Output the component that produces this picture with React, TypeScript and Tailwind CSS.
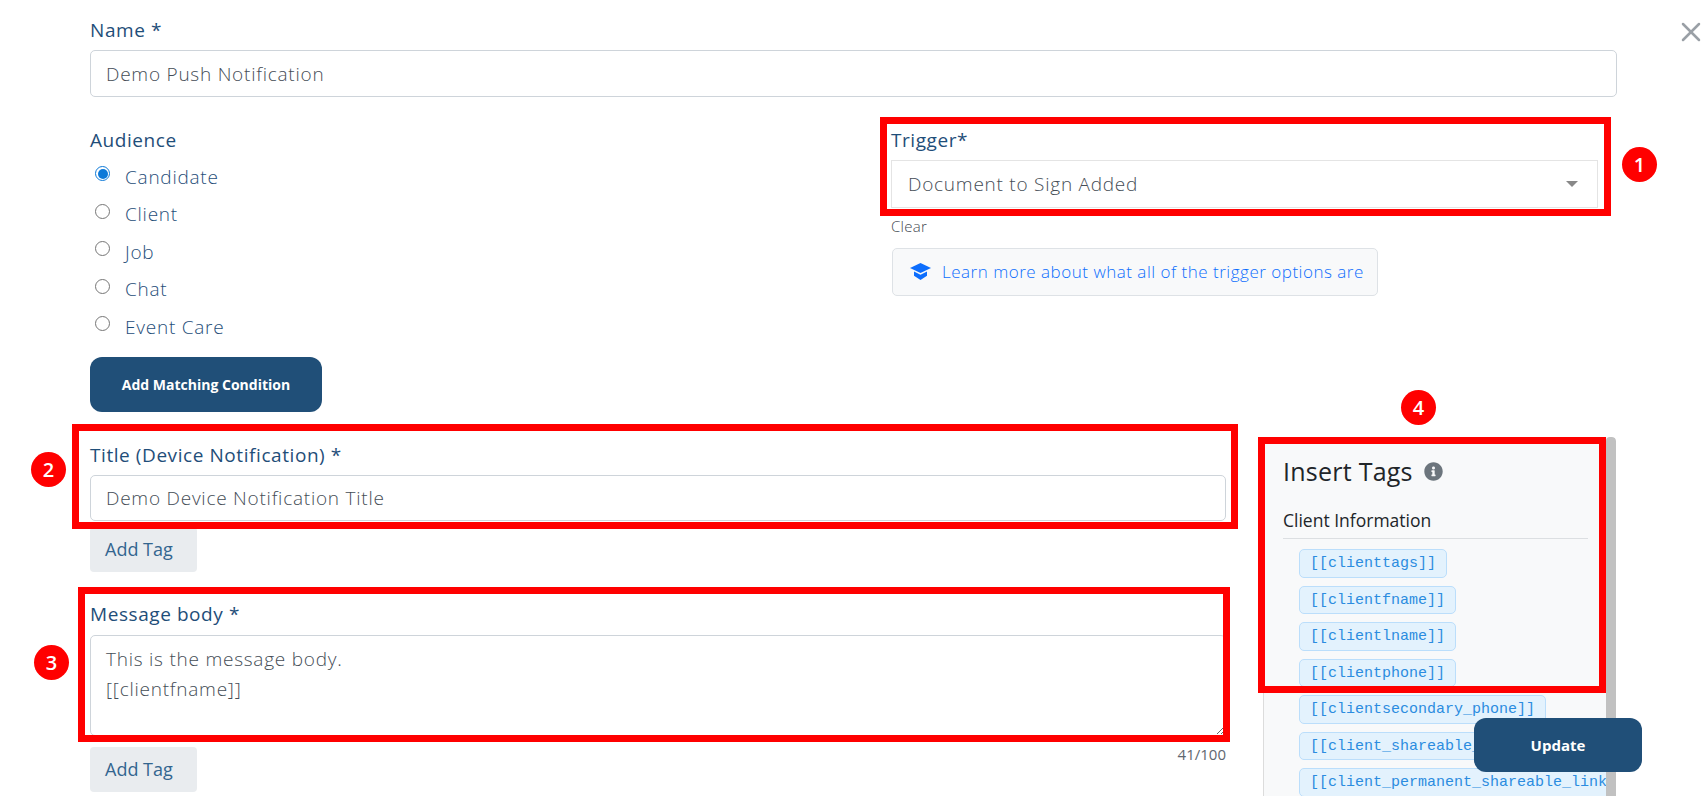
import { FaInfoCircle } from 'react-icons/fa';
import { X } from 'lucide-react';

const audiences = ['Candidate', 'Client', 'Job', 'Chat', 'Event Care'];

const tags = [
  '[[clienttags]]',
  '[[clientfname]]',
  '[[clientlname]]',
  '[[clientphone]]',
  '[[clientsecondary_phone]]',
  '[[client_shareable_link]]',
  '[[client_permanent_shareable_link]]',
];

function Label({ children }: { children: React.ReactNode }) {
  return <label className="block text-[19px] leading-[24px] font-medium tracking-[0.03em] text-[#1f4e79]">{children}</label>;
}

function AddTag({ className }: { className: string }) {
  return (
    <button className={`block w-[107px] h-[45px] pl-[15px] text-left rounded bg-[#e9ecef] text-[18px] text-[#33658f] ${className}`}>
      Add Tag
    </button>
  );
}

function Badge({ n, className }: { n: number; className: string }) {
  return (
    <span className={`absolute flex items-center justify-center w-[35px] h-[35px] rounded-full bg-[#ff0000] text-white text-[20px] font-semibold ${className}`}>
      {n}
    </span>
  );
}

function CapIcon() {
  return (
    <svg viewBox="0 0 21 17" className="w-[21px] h-[17px] -mt-[2px] shrink-0 fill-[#0d6efd]">
      <path d="M10.5 0 21 5 10.5 10 0 5z" />
      <path d="M4 8.5l6.5 3.2L17 8.5v4.3L10.5 17 4 12.8z" />
    </svg>
  );
}

export default function App() {
  return (
    <div className="relative h-[796px] overflow-hidden bg-white font-['Open_Sans','Liberation_Sans',sans-serif]">
      {/* Main form */}
      <div className="pl-[90px] pr-[88px] pt-[18px]">
        <Label>Name *</Label>
        <input
          readOnly
          value="Demo Push Notification"
          className="block w-full h-[47px] mt-[8px] px-[15px] rounded-[5px] border border-[#ced4da] text-[19px] tracking-[0.04em] font-light text-[#454d56] outline-none"
        />

        {/* Audience + trigger */}
        <div className="flex mt-[31px]">
          <div className="w-[801px]">
            <Label>Audience</Label>
            <div className="mt-[14px] flex flex-col gap-[15.5px]">
              {audiences.map((a, i) => (
                <div key={a} className="flex items-center h-[22px]">
                  <span
                    className={`w-[15px] h-[15px] ml-[5px] -mt-[7px] rounded-full border flex items-center justify-center ${
                      i === 0 ? 'border-[#0d79d8]' : 'border-[#767676]'
                    }`}
                  >
                    {i === 0 && <span className="w-[10px] h-[10px] rounded-full bg-[#0d79d8]" />}
                  </span>
                  <span className="ml-[15px] text-[19px] tracking-[0.04em] font-light text-[#1f4e79]">{a}</span>
                </div>
              ))}
            </div>
            <button className="block w-[232px] h-[55px] mt-[19px] rounded-[12px] bg-[#204f78] text-white text-[14px] font-bold">
              Add Matching Condition
            </button>
          </div>

          <div className="w-[707px]">
            <Label>Trigger*</Label>
            <div className="flex items-center justify-between h-[48px] mt-[8px] pl-[16px] pr-[19px] border border-[#e4e4e4] text-[19px] tracking-[0.04em] font-light text-[#454d56]">
              <span>Document to Sign Added</span>
              <span className="w-0 h-0 border-x-[6px] border-x-transparent border-t-[6px] border-t-[#888888]" />
            </div>
            <div className="mt-[8px] text-[15px] leading-[20px] tracking-[0.02em] font-light text-[#3f4850]">Clear</div>
            <div className="flex items-center w-[486px] h-[48px] mt-[12px] ml-[1px] pl-[17px] rounded-[5px] border border-[#dee2e6] bg-[#f8f9fa]">
              <CapIcon />
              <span className="ml-[11px] text-[17px] tracking-[0.03em] font-light text-[#0d6efd]">Learn more about what all of the trigger options are</span>
            </div>
          </div>
        </div>

        {/* Message fields + tag list */}
        <div className="flex gap-[37px] mt-[25px]">
          <div className="w-[1136px] shrink-0">
            <div className="mt-[6px]">
              <Label>Title (Device Notification) *</Label>
            </div>
            <input
              readOnly
              value="Demo Device Notification Title"
              className="block w-full h-[46px] mt-[8px] px-[15px] rounded-[5px] border border-[#ced4da] text-[19px] tracking-[0.04em] font-light text-[#454d56] outline-none"
            />
            <AddTag className="mt-[6px]" />

            <div className="mt-[30px]">
              <Label>Message body *</Label>
            </div>
            <textarea
              readOnly
              value={'This is the message body.\n[[clientfname]]'}
              className="block w-full h-[101px] mt-[9px] px-[15px] py-[8px] rounded-[5px] border border-[#ced4da] text-[19px] leading-[30px] tracking-[0.04em] font-light text-[#454d56] outline-none"
            />
            <div className="text-right text-[15px] leading-[20px] mt-[8px] text-[#5f6770]">41/100</div>
            <AddTag className="-mt-[17px]" />
          </div>

          {/* Insert tags panel */}
          <div className="relative w-[353px] h-[400px] pl-[19px] pt-[18px] overflow-hidden rounded-tr border-l border-[#dcdcdc] bg-[#f8f9fa]">
            <div className="flex items-center">
              <span className="text-[25px] leading-[32px] tracking-[0.01em] text-[#212529]">Insert Tags</span>
              <FaInfoCircle className="ml-[11px] text-[19px] text-[#6c757d]" />
            </div>
            <div className="mt-[21px] pb-[6px] mr-[28px] border-b border-[#dcdfe2] text-[17.5px] leading-[24px] text-[#212529]">
              Client Information
            </div>
            <div className="mt-[10px] ml-[16px] flex flex-col items-start gap-[8px] w-[307px] overflow-hidden">
              {tags.map(t => (
                <span
                  key={t}
                  className="shrink-0 h-[28.5px] px-[10px] leading-[27px] rounded-[5px] border border-[#bbdefb] bg-[#e3f2fd] text-[15px] whitespace-nowrap text-[#2b8ce0] font-['Liberation_Mono',monospace]"
                >
                  {t}
                </span>
              ))}
            </div>
            {/* scrollbar */}
            <div className="absolute top-0 right-0 w-[10px] h-full rounded-t bg-[#c1c1c1]" />
          </div>
        </div>
      </div>

      {/* Close */}
      <X className="absolute top-[16px] left-[1675px] w-[32px] h-[32px] text-[#9aa0a6]" strokeWidth={1.9} />

      {/* Annotation boxes */}
      <div className="absolute left-[880px] top-[117px] w-[731px] h-[99px] border-[7px] border-[#ff0000]" />
      <div className="absolute left-[72px] top-[424px] w-[1166px] h-[105px] border-[7px] border-[#ff0000]" />
      <div className="absolute left-[78px] top-[587px] w-[1152px] h-[155px] border-[7px] border-[#ff0000]" />
      <div className="absolute left-[1258px] top-[437px] w-[348px] h-[256px] border-[7px] border-[#ff0000]" />
      <Badge n={1} className="left-[1622px] top-[147px]" />
      <Badge n={2} className="left-[31px] top-[452px]" />
      <Badge n={3} className="left-[34px] top-[645px]" />
      <Badge n={4} className="left-[1401px] top-[390px]" />

      {/* Floating save */}
      <button className="absolute left-[1474px] top-[718px] w-[168px] h-[54px] rounded-[12px] bg-[#204f78] text-white text-[15px] font-bold">
        Update
      </button>
    </div>
  );
}
